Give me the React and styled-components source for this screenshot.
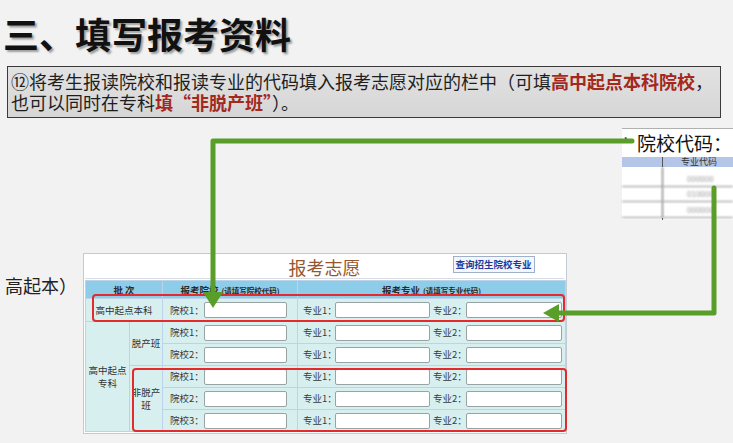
import styled, { createGlobalStyle } from "styled-components";

const GlobalStyle = createGlobalStyle`
  html, body {
    margin: 0;
    padding: 0;
    background: #f2f2f2;
  }
  * {
    box-sizing: border-box;
  }
`;

const cjk = `"Noto Sans CJK SC", "Noto Sans", sans-serif`;

// slide
const Slide = styled.div`
  position: relative;
  width: 733px;
  height: 443px;
  overflow: hidden;
  background: #f2f2f2;
  font-family: ${cjk};
  color: #222;
`;

const Title = styled.h1`
  margin: 0;
  padding: 15px 0 0 3px;
  font-size: 36px;
  line-height: 36px;
  font-weight: 700;
  color: #111;
  text-shadow: 2px 2px 2px rgba(0, 0, 0, 0.35);
`;

const Note = styled.div`
  margin: 15px 0 0 7px;
  width: 714px;
  height: 52px;
  padding: 4px 3px;
  border: 1px solid #3a3a3a;
  background: linear-gradient(#e2e2e2, #d6d6d6);
  font-size: 18px;
  color: #1e1e1e;
`;

const NoteLine = styled.div`
  height: 21px;
  line-height: 21px;
  white-space: nowrap;
`;

const Hot = styled.span`
  color: #a3281d;
  font-weight: 700;
`;

const Lower = styled.div`
  display: flex;
  align-items: flex-start;
  margin-top: 135px;
`;

const SideLabel = styled.div`
  width: 83px;
  padding: 21px 0 0 5px;
  font-size: 18px;
  line-height: 22px;
  color: #222;
`;

// form panel
const Panel = styled.div`
  position: relative;
  width: 484px;
  background: #fff;
  border: 1px solid #c3cad6;
  padding: 0 2px 1px 1px;
`;

const PanelHead = styled.div`
  display: grid;
  grid-template-columns: 1fr auto 1fr;
  align-items: center;
  height: 25px;
  border-bottom: 1px solid #d8dde4;
`;

const PanelTitle = styled.div`
  grid-column: 2;
  font-size: 18px;
  line-height: 22px;
  color: #95562f;
  padding-top: 2px;
`;

const QueryButton = styled.button`
  grid-column: 3;
  justify-self: start;
  margin-left: 92px;
  margin-top: -4px;
  height: 17px;
  padding: 0 2px;
  border: 1px solid #9fb1c9;
  background: #f3f6fb;
  color: #1c3b9e;
  font-family: ${cjk};
  font-size: 9.5px;
  font-weight: 700;
  line-height: 15px;
  white-space: nowrap;
`;

const Table = styled.table`
  border-collapse: collapse;
  table-layout: fixed;
  width: 480px;
  margin-top: 1px;
  font-size: 9.5px;
  color: #333;
`;

const Th = styled.th`
  height: 18px;
  padding: 0;
  background: #8ecdea;
  border: 1px solid #bcd3ea;
  font-size: 9.5px;
  font-weight: 700;
  color: #2a2a2a;
  text-align: center;
  white-space: nowrap;
`;

const Hint = styled.span`
  font-size: 7.5px;
  margin-left: 3px;
`;

const Td = styled.td`
  height: ${(p) => p.$h || 22}px;
  padding: 0;
  background: #d8efef;
  border: 1px solid #bcd3ea;
  text-align: ${(p) => (p.$center ? "center" : "left")};
  vertical-align: middle;
  line-height: 13px;
`;

const Fields = styled.div`
  display: flex;
  align-items: center;
  padding-left: ${(p) => p.$pad}px;
`;

const Field = styled.label`
  display: flex;
  align-items: center;
  margin-right: 3px;
`;

const FieldLabel = styled.span`
  width: ${(p) => p.$w}px;
  white-space: nowrap;
  color: #3a3a3a;
`;

const Input = styled.input`
  width: ${(p) => p.$w}px;
  height: 16px;
  padding: 0;
  border: 1px solid #98a3a3;
  border-radius: 2px;
  background: #fff;
`;

const Highlight = styled.div`
  position: absolute;
  left: ${(p) => p.$x}px;
  top: ${(p) => p.$y}px;
  width: ${(p) => p.$w}px;
  height: ${(p) => p.$h}px;
  border: 2.5px solid #e42a2a;
  border-radius: 4px;
  pointer-events: none;
`;

// pasted snippet at top right
const Snippet = styled.div`
  position: absolute;
  left: 622px;
  top: 128px;
  width: 111px;
  height: 92px;
  background: #fff;
  border-top: 1px solid #b0b0b0;
  display: grid;
  grid-template-columns: 41px 70px;
  grid-template-rows: 28px 10px 20px 15px 16px 1fr;
`;

const SnipTitle = styled.div`
  grid-column: 1 / 3;
  display: flex;
  align-items: center;
  font-size: 19px;
  line-height: 26px;
  color: #111;
  white-space: nowrap;
`;

const Tick = styled.span`
  width: 15px;
  padding-left: 2px;
  font-size: 14px;
  color: #222;
`;

const SnipHead = styled.div`
  background: #b4c6e7;
  border-right: ${(p) => (p.$first ? "1px solid #555" : "none")};
  font-size: 9px;
  line-height: 10px;
  color: #333;
  padding-left: 18px;
  white-space: nowrap;
`;

const SnipCell = styled.div`
  border-bottom: 1px solid #8a8a8a;
  border-right: ${(p) => (p.$first ? "1px solid #555" : "none")};
  display: flex;
  align-items: flex-end;
  padding: 0 0 2px 24px;
  font-size: 8px;
  color: #999;
  filter: blur(0.8px);
`;

const SnipFoot = styled.div`
  border-right: ${(p) => (p.$first ? "1px solid #555" : "none")};
`;

const Arrows = styled.svg`
  position: absolute;
  left: 0;
  top: 0;
  pointer-events: none;
`;

const SchoolCell = ({ n }) => (
  <Td>
    <Fields $pad={7}>
      <Field>
        <FieldLabel $w={34}>院校{n}：</FieldLabel>
        <Input $w={83} />
      </Field>
    </Fields>
  </Td>
);

const MajorCell = () => (
  <Td>
    <Fields $pad={5}>
      <Field>
        <FieldLabel $w={32}>专业1：</FieldLabel>
        <Input $w={95} />
      </Field>
      <Field>
        <FieldLabel $w={33}>专业2：</FieldLabel>
        <Input $w={96} />
      </Field>
    </Fields>
  </Td>
);

export default function App() {
  return (
    <Slide>
      <GlobalStyle />
      <Title>三、填写报考资料</Title>
      <Note>
        <NoteLine>
          ⑫将考生报读院校和报读专业的代码填入报考志愿对应的栏中（可填
          <Hot>高中起点本科院校</Hot>，
        </NoteLine>
        <NoteLine>
          也可以同时在专科<Hot>填“非脱产班”</Hot>）。
        </NoteLine>
      </Note>

      <Lower>
        <SideLabel>高起本）</SideLabel>
        <Panel>
          <PanelHead>
            <PanelTitle>报考志愿</PanelTitle>
            <QueryButton>查询招生院校专业</QueryButton>
          </PanelHead>
          <Table>
            <colgroup>
              <col style={{ width: 44 }} />
              <col style={{ width: 33 }} />
              <col style={{ width: 135 }} />
              <col style={{ width: 268 }} />
            </colgroup>
            <thead>
              <tr>
                <Th colSpan={2}>批 次</Th>
                <Th>
                  报考院校<Hint>(请填写院校代码)</Hint>
                </Th>
                <Th>
                  报考专业<Hint>(请填写专业代码)</Hint>
                </Th>
              </tr>
            </thead>
            <tbody>
              <tr>
                <Td colSpan={2} $center $h={23}>
                  高中起点本科
                </Td>
                <SchoolCell n={1} />
                <MajorCell />
              </tr>
              <tr>
                <Td rowSpan={5} $center>
                  高中起点
                  <br />
                  专科
                </Td>
                <Td rowSpan={2} $center>
                  脱产班
                </Td>
                <SchoolCell n={1} />
                <MajorCell />
              </tr>
              <tr>
                <SchoolCell n={2} />
                <MajorCell />
              </tr>
              <tr>
                <Td rowSpan={3} $center>
                  非脱产
                  <br />
                  班
                </Td>
                <SchoolCell n={1} />
                <MajorCell />
              </tr>
              <tr>
                <SchoolCell n={2} />
                <MajorCell />
              </tr>
              <tr>
                <SchoolCell n={3} />
                <MajorCell />
              </tr>
            </tbody>
          </Table>
          <Highlight $x={8} $y={40} $w={473} $h={28} />
          <Highlight $x={48} $y={114} $w={435} $h={64} />
        </Panel>
      </Lower>

      <Snippet>
        <SnipTitle>
          <Tick>’</Tick>院校代码：
        </SnipTitle>
        <SnipHead $first />
        <SnipHead>专业代码</SnipHead>
        <SnipCell $first />
        <SnipCell>000000</SnipCell>
        <SnipCell $first />
        <SnipCell>010000</SnipCell>
        <SnipCell $first />
        <SnipCell>000000</SnipCell>
        <SnipFoot $first />
        <SnipFoot />
      </Snippet>

      <Arrows width="733" height="443" viewBox="0 0 733 443">
        <g fill="none" stroke="#5a9e2a" strokeWidth="5" strokeLinejoin="round" strokeLinecap="round">
          <path d="M632 141 L213 141 L213 294" />
          <path d="M714 188 L714 313 L558 313" />
        </g>
        <g fill="#5a9e2a">
          <polygon points="203,292 223,292 213,308" />
          <polygon points="559,304 559,322 543,313" />
        </g>
      </Arrows>
    </Slide>
  );
}
